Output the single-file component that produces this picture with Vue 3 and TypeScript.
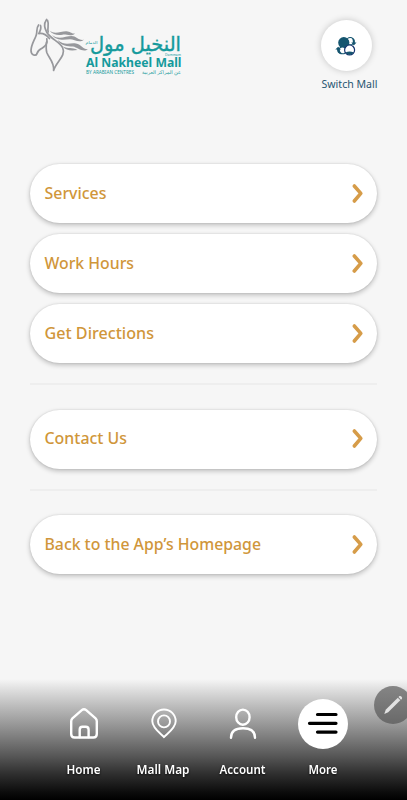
<script setup lang="ts">
interface MenuItem {
  label: string
  width: number
}

const groups: MenuItem[][] = [
  [
    { label: 'Services', width: 62 },
    { label: 'Work Hours', width: 89.5 },
    { label: 'Get Directions', width: 109.5 },
  ],
  [{ label: 'Contact Us', width: 82.5 }],
  [{ label: 'Back to the App’s Homepage', width: 216.5 }],
]

const tabs = [
  { id: 'home', label: 'Home', width: 34 },
  { id: 'map', label: 'Mall Map', width: 53 },
  { id: 'account', label: 'Account', width: 46 },
  { id: 'more', label: 'More', width: 29 },
]
</script>

<template>
  <div class="screen">
    <header class="header">
      <svg class="logo" width="156" height="62" viewBox="28 16 156 62">
        <g class="horse">
          <path d="M38.6 25C35.8 28.5 37.6 31.5 36.2 35.2C34.6 40 31.2 44.5 31 50.5C31 55.5 36 56.3 37 53.6C37.3 50.5 40 49.4 42.4 48C46 45.8 47.6 42.5 46.8 38.8" />
          <path d="M40.5 25.5C41.7 28.5 40.2 31 38.8 33.6C43 32.8 46.5 35 49.5 38.5" />
          <path d="M46.6 19.5C43 24.5 45 28.5 46.6 32C50 38.5 59.5 41.5 62.6 47.5C66.5 56 56 61.5 53.6 70.5C54.5 62 48.5 57.5 46.8 52.5C45.8 49 46.2 45 46.6 42" />
          <path d="M47.6 20.5C49.4 24.5 47 28.5 48.2 32" />
        </g>
        <g class="mane">
          <path d="M49.5 30.5C55 35 60.5 31 66.5 31.2C70.5 31.4 71.5 34 75 33.4C71 37.2 66.5 34 62.5 34.7C58 35.5 53 35 49.5 30.5Z" />
          <path d="M52 35C59 40.5 65.5 36 71.5 36C76.5 36 78.5 40.8 83.8 39.8C79.5 43.4 74 39.4 70 39.3C64 39.7 57 41.3 52 35Z" />
          <path d="M57.5 40C65 46.2 70 42.4 76 43.5C81.5 44.5 83 49.6 88 49.2C83 53 77.5 47.3 73 46.5C67.5 46.2 61.5 46.5 57.5 40Z" />
          <path d="M63 46.5C68 49 72 47 77.5 50C72 50.8 66 51 63 46.5Z" />
        </g>
        <text class="arabic-tiny" x="85.5" y="43.8" textLength="12" lengthAdjust="spacingAndGlyphs">الدمام</text>
        <text class="arabic" x="90" y="50.5" textLength="91" lengthAdjust="spacingAndGlyphs">النخيل مول</text>
        <text class="latin-tiny" x="165" y="56" textLength="16" lengthAdjust="spacingAndGlyphs">Dammam</text>
        <text class="name" x="86" y="66.5" textLength="95.5" lengthAdjust="spacingAndGlyphs">Al Nakheel Mall</text>
        <text class="byline" x="86" y="74" textLength="48" lengthAdjust="spacingAndGlyphs">BY ARABIAN CENTRES</text>
        <text class="byline" x="142" y="74" textLength="39" lengthAdjust="spacingAndGlyphs">عن المراكز العربية</text>
      </svg>
      <div class="switch">
        <div class="switch-disc">
          <svg width="24" height="20" viewBox="335 35 24 20">
            <circle class="line" cx="351.2" cy="40.2" r="3.7" />
            <path class="ink" d="M352.5 36.5C355.2 37 356.2 39 355.8 41.5H357.5L354.8 44.5L352.3 41.5H353.8C354 39.5 353.5 38 352.5 36.5Z" />
            <circle class="ink" cx="344.8" cy="41.7" r="5.6" />
            <circle class="line" cx="343.4" cy="49.4" r="3.4" />
            <path class="ink" d="M336.3 48.6L339.2 45.8L342 48.6H340.6C340.8 50.8 341.9 52 343.8 52.6C340.5 53.8 338 51.8 338 48.6Z" />
            <circle class="ring" cx="350.6" cy="49" r="5" />
            <path class="ink" d="M346.8 51.2q3.8-1.6 7.6 0q-1 2.8-3.8 2.8t-3.8-2.8z" />
          </svg>
        </div>
        <svg class="switch-label" width="58" height="18">
          <text x="1.5" y="12" textLength="56" lengthAdjust="spacingAndGlyphs">Switch Mall</text>
        </svg>
      </div>
    </header>

    <main class="menu">
      <section v-for="(group, g) in groups" :key="g" class="group">
        <button v-for="item in group" :key="item.label" class="row">
          <svg class="row-label" :width="item.width + 2" height="28">
            <text x="0.5" y="19" :textLength="item.width" lengthAdjust="spacingAndGlyphs">{{ item.label }}</text>
          </svg>
          <svg class="chevron" width="12" height="20" viewBox="0 0 12 20">
            <path d="M2.3 2L8.8 9.4L2.3 17" />
          </svg>
        </button>
      </section>
    </main>

    <nav class="tabs">
      <div v-for="tab in tabs" :key="tab.id" class="tab">
        <div class="tab-icon" :class="{ active: tab.id === 'more' }">
          <svg v-if="tab.id === 'home'" width="30" height="34" viewBox="0 0 30 34">
            <path d="M2.2 14.2Q2.2 12.6 3.4 11.4L12.8 3.2Q15 1.3 17.2 3.2L26.6 11.4Q27.8 12.6 27.8 14.2V27Q27.8 30.5 24.3 30.5H5.7Q2.2 30.5 2.2 27Z" />
            <path d="M10.7 30V22.7Q10.7 19.7 13.4 19.7H16.8Q19.6 19.7 19.6 22.7V30" />
          </svg>
          <svg v-else-if="tab.id === 'map'" class="thin" width="30" height="34" viewBox="0 0 30 34">
            <path d="M15 30.2C11.5 26.5 3.3 20.7 3.3 14.2A11.7 11.7 0 0 1 26.7 14.2C26.7 20.7 18.5 26.5 15 30.2Z" />
            <circle cx="15" cy="14.4" r="6" />
          </svg>
          <svg v-else-if="tab.id === 'account'" width="30" height="34" viewBox="0 0 30 34">
            <ellipse cx="14.9" cy="10.2" rx="6.7" ry="7.6" />
            <path d="M3 30.7C3 24 7 21.2 15 21.2S27 24 27 30.7" />
          </svg>
          <svg v-else class="bars" width="50" height="50" viewBox="0 0 50 50">
            <path d="M19.5 15.5H38M11.5 24.3H38M19.5 33.1H38" />
          </svg>
        </div>
        <svg class="tab-label" :width="tab.width + 2" height="20">
          <text x="0.5" y="14" :textLength="tab.width" lengthAdjust="spacingAndGlyphs">{{ tab.label }}</text>
        </svg>
      </div>
    </nav>

    <div class="edit">
      <svg width="38" height="38" viewBox="0 0 38 38">
        <path d="M10.3 28L11.7 23.8L23.8 11.8L26.3 14.3L14.2 26.3Z" />
        <path d="M24.5 11L25.4 10.1Q26.2 9.6 27 10.3L27.9 11.3Q28.4 12.2 27.8 12.9L27 13.7Z" />
      </svg>
    </div>
  </div>
</template>

<style>
body {
  margin: 0;
  background: #f6f6f6;
}
</style>

<style scoped>
.screen {
  position: relative;
  display: flex;
  flex-direction: column;
  box-sizing: border-box;
  width: 407px;
  height: 800px;
  overflow: hidden;
  background: #f6f6f6;
  font-family: "Noto Sans", "Open Sans", sans-serif;
}
svg {
  display: block;
  overflow: visible;
}
.header {
  display: flex;
  justify-content: space-between;
  box-sizing: border-box;
  height: 164px;
  padding: 16px 29px 0 28px;
}
.logo {
  fill: #159a9c;
}
.horse {
  fill: none;
  stroke: #97989c;
  stroke-width: 1.7;
  stroke-linecap: round;
  stroke-linejoin: round;
}
.mane {
  fill: #97989c;
}
.arabic {
  font: 400 20px "DejaVu Sans", sans-serif;
  stroke: #159a9c;
  stroke-width: 0.4;
}
.arabic-tiny {
  font: 4px "DejaVu Sans", sans-serif;
}
.latin-tiny {
  font-size: 4px;
}
.name {
  font-size: 12.5px;
  font-weight: 700;
}
.byline {
  font: 5px "Noto Sans", "DejaVu Sans", sans-serif;
}
.switch {
  display: flex;
  flex-direction: column;
  align-items: center;
  padding-top: 4px;
}
.switch-disc {
  display: flex;
  align-items: center;
  justify-content: center;
  width: 51px;
  height: 51px;
  margin-right: 6px;
  border-radius: 50%;
  background: #fff;
  box-shadow: 0 0 7px rgba(0, 0, 0, 0.2);
}
.ink {
  fill: #15556f;
}
.line {
  fill: #fff;
  stroke: #15556f;
  stroke-width: 1.1;
}
.ring {
  fill: #fff;
  stroke: #15336d;
  stroke-width: 1.2;
}
.switch-label {
  margin-top: 5px;
  fill: #285571;
  font-size: 11px;
}
.menu {
  display: flex;
  flex-direction: column;
  padding: 0 30px;
}
.group {
  display: flex;
  flex-direction: column;
  gap: 11px;
}
.group + .group {
  margin-top: 20px;
  padding-top: 24.5px;
  border-top: 2px solid #eee;
}
.row {
  display: flex;
  align-items: center;
  justify-content: space-between;
  box-sizing: border-box;
  height: 59px;
  padding: 0 13px 0 14px;
  border: 0;
  border-radius: 30px;
  background: #fff;
  box-shadow: 0 2px 5px rgba(0, 0, 0, 0.24), 0 0 2px rgba(0, 0, 0, 0.12);
  font-family: inherit;
}
.row-label {
  fill: #d0963a;
  font-size: 17px;
  font-weight: 500;
}
.chevron {
  fill: none;
  stroke: #d69c49;
  stroke-width: 3.6;
  stroke-linecap: round;
  stroke-linejoin: round;
}
.tabs {
  display: flex;
  box-sizing: border-box;
  height: 121px;
  margin-top: auto;
  padding: 20px 44px 0;
  background: linear-gradient(#f6f6f6, #dedede 9%, #bdbdbd 22%, #999 37%, #797979 50%, #565656 64%, #303030 78%, #0b0b0b 94%, #000);
}
.tab {
  display: flex;
  flex: 1;
  flex-direction: column;
  align-items: center;
  gap: 11px;
}
.tab-icon {
  display: flex;
  align-items: center;
  justify-content: center;
  width: 50px;
  height: 50px;
  border-radius: 50%;
  fill: none;
  stroke: #fff;
  stroke-width: 2.4;
  stroke-linecap: round;
  stroke-linejoin: round;
}
.tab-icon.active {
  background: #fff;
}
.thin {
  stroke-width: 1.9;
}
.bars {
  stroke: #000;
  stroke-width: 3.2;
}
.tab-label {
  fill: #fff;
  font-size: 12px;
  font-weight: 600;
  filter: drop-shadow(0 1px 1px rgba(0, 0, 0, 0.8));
}
.edit {
  position: absolute;
  top: 686px;
  left: 374px;
  width: 38px;
  height: 38px;
  border-radius: 50%;
  background: linear-gradient(#858585, #696969);
  fill: #e2e2e2;
}
</style>
